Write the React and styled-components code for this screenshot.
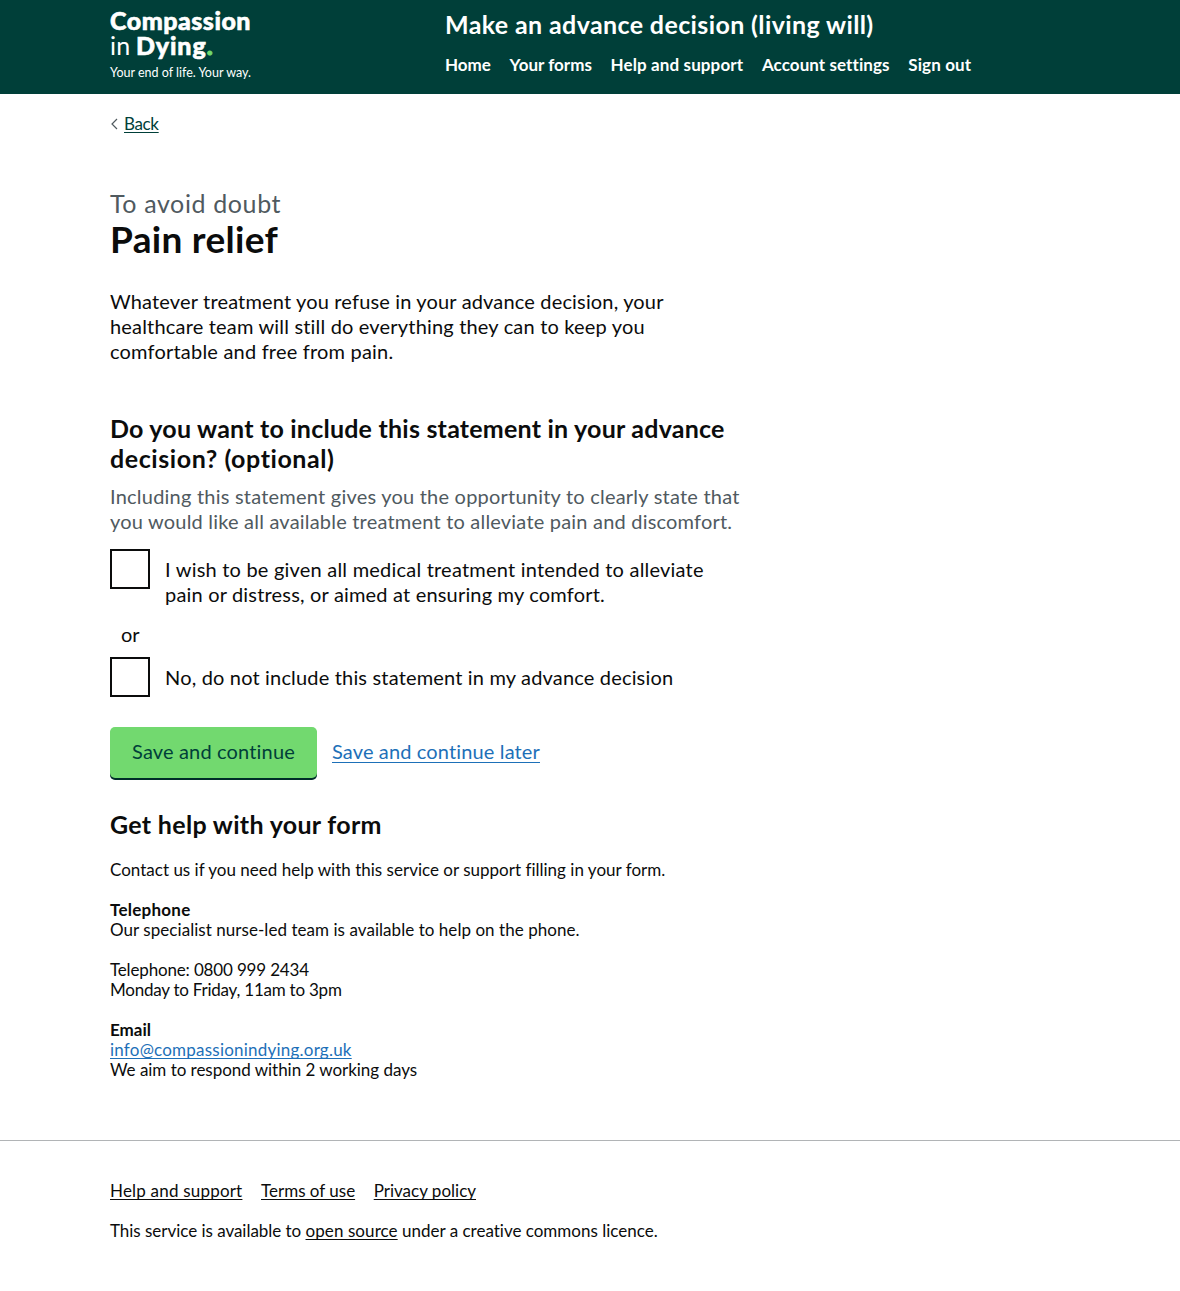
import React from "react";
import styled, { createGlobalStyle } from "styled-components";

const GlobalStyle = createGlobalStyle`
  *, *::before, *::after { box-sizing: border-box; }
  body {
    margin: 0;
    background: #fff;
    color: #0b0c0c;
    font-family: Lato, "Open Sans", sans-serif;
    font-size: 17px;
    line-height: 20px;
    font-variant-ligatures: none;
    -webkit-font-smoothing: antialiased;
  }
  h1, h2, p { margin: 0; }
`;

const Container = styled.div`
  width: 960px;
  margin: 0 auto;
`;

const Header = styled.header`
  height: 94px;
  background: #003f39;
  color: #fff;
`;

const HeaderRow = styled(Container)`
  display: flex;
`;

const Brand = styled.div`
  width: 335px;
  padding-top: 8px;
`;

const Line = styled.span`
  display: block;
  white-space: nowrap;
  letter-spacing: ${(p) => p.$track || 0}px;
`;

const Wordmark = styled(Line)`
  font-size: 25px;
  line-height: 25px;
  font-weight: ${(p) => (p.$light ? 400 : 900)};
  word-spacing: ${(p) => (p.$light ? -1 : 0)}px;
  -webkit-text-stroke: ${(p) => (p.$light ? 0 : 0.6)}px currentColor;

  b { font-weight: 900; letter-spacing: 0.9px; -webkit-text-stroke: 0.6px currentColor; }
  i { color: #70d86d; font-style: normal; -webkit-text-stroke: 1.2px currentColor; }
`;

const Tagline = styled(Line)`
  margin-top: 5px;
  font-size: 12.5px;
  line-height: 20px;
`;

const ServiceName = styled.div`
  padding-top: 9px;
  font-size: 25px;
  line-height: 30px;
  font-weight: 700;
`;

const Nav = styled.nav`
  display: flex;
  gap: ${(p) => p.$gap}px;
  margin-top: ${(p) => p.$top || 0}px;
  font-weight: ${(p) => (p.$bold ? 700 : 400)};
`;

const NavLink = styled.a`
  color: inherit;
  white-space: nowrap;
  letter-spacing: ${(p) => p.$track || 0}px;
  text-decoration: ${(p) => (p.$plain ? "none" : "underline")};
  text-decoration-thickness: 1px;
  text-underline-offset: ${(p) => p.$offset || 2}px;
  text-decoration-skip-ink: none;
`;

const TextLink = styled(NavLink)`
  color: ${(p) => p.$color || "#1d70b8"};
`;

const BackRow = styled.div`
  display: flex;
  align-items: center;
  gap: 6px;
  padding: 20px 0 54px;

  svg { display: block; }
`;

const Caption = styled.p`
  color: #505a5f;
  font-size: 25px;
  line-height: 30px;
`;

const Title = styled.h1`
  margin-top: 1px;
  font-size: 37px;
  line-height: 40px;
  font-weight: 700;
`;

const Body = styled.p`
  margin-top: ${(p) => p.$top || 0}px;
  color: ${(p) => (p.$hint ? "#505a5f" : "#0b0c0c")};
  font-size: 20px;
  line-height: 25px;
`;

const Heading = styled.h2`
  margin-top: ${(p) => p.$top}px;
  padding-bottom: 1px;
  font-size: 25px;
  line-height: 30px;
  font-weight: 700;
`;

const Option = styled.label`
  display: flex;
  gap: 15px;
  margin-top: ${(p) => p.$top}px;
  font-size: 20px;
  line-height: 25px;
`;

const Checkbox = styled.input.attrs({ type: "checkbox" })`
  appearance: none;
  flex: none;
  width: 40px;
  height: 40px;
  margin: 0;
  border: 2px solid #0b0c0c;
  background: #fff;
`;

const OptionText = styled.span`
  padding-top: 8px;
`;

const Divider = styled.div`
  margin-top: 15px;
  padding-left: 11px;
  font-size: 20px;
  line-height: 25px;
`;

const Actions = styled.div`
  display: flex;
  align-items: center;
  gap: 15px;
  margin-top: 30px;
  font-size: 20px;
  line-height: 25px;

  & > a { padding-bottom: 2px; }
`;

const Button = styled.button`
  width: 207px;
  height: 51px;
  padding: 0 0 2px;
  border: 0;
  border-radius: 5px;
  background: #72d96f;
  box-shadow: 0 2px 0 #002d29;
  color: #003f39;
  font: inherit;
  letter-spacing: ${(p) => p.$track}px;
`;

const Support = styled.p`
  margin-top: 20px;

  strong { font-weight: 700; }
`;

const Footer = styled.footer`
  margin-top: 60px;
  padding: 40px 0 50px;
  border-top: 1px solid #b1b4b6;
`;

const FooterNote = styled.p`
  margin-top: 20px;
  white-space: nowrap;
`;

const Lead = styled.span`
  letter-spacing: -0.03px;
`;

export default function App() {
  return (
    <>
      <GlobalStyle />
      <Header>
        <HeaderRow>
          <Brand>
            <Wordmark $track={0.5}>Compassion</Wordmark>
            <Wordmark $light $track={0.2}>in <b>Dying<i>.</i></b></Wordmark>
            <Tagline>Your end of life. Your way.</Tagline>
          </Brand>
          <div>
            <ServiceName><Line $track={0.38}>Make an advance decision (living will)</Line></ServiceName>
            <Nav $gap={18.7} $top={16} $bold>
              <NavLink $plain>Home</NavLink>
              <NavLink $plain>Your forms</NavLink>
              <NavLink $plain $track={0.12}>Help and support</NavLink>
              <NavLink $plain $track={0.08}>Account settings</NavLink>
              <NavLink $plain $track={0.12}>Sign out</NavLink>
            </Nav>
          </div>
        </HeaderRow>
      </Header>
      <Container>
        <BackRow>
          <svg width="8" height="12" viewBox="0 0 8 12" fill="none" stroke="#505a5f" strokeWidth="1.2">
            <path d="M7 1L2 6l5 5" />
          </svg>
          <TextLink $color="#003f39" $track={-0.35}>Back</TextLink>
        </BackRow>
        <main>
          <Caption><Line $track={0.62}>To avoid doubt</Line></Caption>
          <Title><Line $track={0.3}>Pain relief</Line></Title>
          <Body $top={30}>
            <Line $track={0.16}>Whatever treatment you refuse in your advance decision, your</Line>
            <Line $track={0.18}>healthcare team will still do everything they can to keep you</Line>
            <Line $track={0.2}>comfortable and free from pain.</Line>
          </Body>
          <Heading $top={49}>
            <Line $track={0.22}>Do you want to include this statement in your advance</Line>
            <Line $track={0.57}>decision? (optional)</Line>
          </Heading>
          <Body $top={10} $hint>
            <Line $track={0.22}>Including this statement gives you the opportunity to clearly state that</Line>
            <Line $track={0.2}>you would like all available treatment to alleviate pain and discomfort.</Line>
          </Body>
          <Option $top={15}>
            <Checkbox />
            <OptionText>
              <Line $track={0.21}>I wish to be given all medical treatment intended to alleviate</Line>
              <Line $track={0.18}>pain or distress, or aimed at ensuring my comfort.</Line>
            </OptionText>
          </Option>
          <Divider>or</Divider>
          <Option $top={10}>
            <Checkbox />
            <OptionText>
              <Line $track={0.17}>No, do not include this statement in my advance decision</Line>
            </OptionText>
          </Option>
          <Actions>
            <Button $track={0.16}>Save and continue</Button>
            <TextLink $track={0.14} $offset={2.5}>Save and continue later</TextLink>
          </Actions>
          <Heading $top={31}><Line $track={0.31}>Get help with your form</Line></Heading>
          <Support>
            <Line $track={0.01}>Contact us if you need help with this service or support filling in your form.</Line>
          </Support>
          <Support>
            <Line as="strong" $track={0.25}>Telephone</Line>
            <Line $track={0.05}>Our specialist nurse-led team is available to help on the phone.</Line>
          </Support>
          <Support>
            <Line $track={-0.16}>Telephone: 0800 999 2434</Line>
            <Line $track={-0.23}>Monday to Friday, 11am to 3pm</Line>
          </Support>
          <Support>
            <Line as="strong">Email</Line>
            <Line><TextLink $track={0.22}>info@compassionindying.org.uk</TextLink></Line>
            <Line $track={-0.03}>We aim to respond within 2 working days</Line>
          </Support>
        </main>
      </Container>
      <Footer>
        <Container>
          <Nav $gap={18.6}>
            <NavLink $track={0.2}>Help and support</NavLink>
            <NavLink>Terms of use</NavLink>
            <NavLink>Privacy policy</NavLink>
          </Nav>
          <FooterNote>
            <Lead>This service is available to </Lead>
            <NavLink $track={0.08}>open source</NavLink> under a creative commons licence.
          </FooterNote>
        </Container>
      </Footer>
    </>
  );
}
